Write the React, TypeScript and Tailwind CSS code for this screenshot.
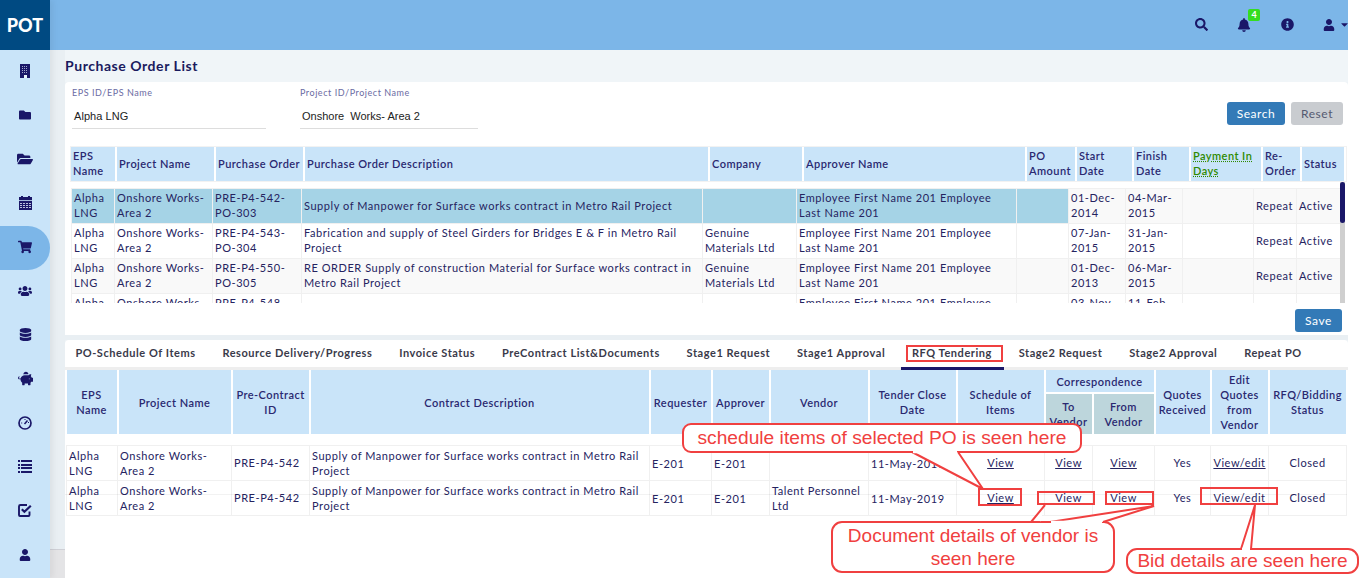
import React from "react";
import { FaFolder, FaFolderOpen, FaShoppingCart, FaUsers, FaDatabase, FaPiggyBank, FaUser, FaSearch, FaBell, FaInfoCircle, FaCaretDown } from "react-icons/fa";

const Gauge = () => (
  <svg width="14" height="14" viewBox="0 0 14 14" fill="none" stroke="currentColor">
    <circle cx="7" cy="7" r="6" strokeWidth="1.7" />
    <path d="M6.5 8 9.5 4.5" strokeWidth="1.5" />
    <path d="M3.2 7h1M7 3v1M10 6.5h1" strokeWidth="1" />
  </svg>
);
const Building = () => (
  <svg width="10" height="14" viewBox="0 0 10 14">
    <rect width="10" height="14" fill="currentColor" />
    <path d="M2 2.5h6M2 4.5h6M2 6.5h6M2 8.5h6" stroke="#a4a7cc" strokeWidth="1" strokeDasharray="1 1" />
    <rect x="4" y="11" width="3" height="3" fill="#e8f2fa" />
  </svg>
);
const Calendar = () => (
  <svg width="13" height="14" viewBox="0 0 13 14">
    <rect y="1" width="13" height="13" fill="currentColor" />
    <rect x="2" y="0" width="2" height="2" fill="currentColor" />
    <rect x="9" y="0" width="2" height="2" fill="currentColor" />
    <path d="M0 4.5h13" stroke="#c9e4f9" strokeWidth="0.8" />
    <path d="M1 7.5h11M1 9.5h11M1 11.5h11" stroke="#b9bfdc" strokeWidth="1" strokeDasharray="2 1" />
  </svg>
);
const ListIcon = () => (
  <svg width="14" height="13" viewBox="0 0 14 13" fill="currentColor">
    <rect y="0" width="2" height="2" /><rect x="3" y="0" width="11" height="2" />
    <rect y="4" width="2" height="2" /><rect x="3" y="4" width="11" height="2" />
    <rect y="7" width="2" height="2" /><rect x="3" y="7" width="11" height="2" />
    <rect y="11" width="2" height="2" /><rect x="3" y="11" width="11" height="2" />
  </svg>
);
const CheckIcon = () => (
  <svg width="14" height="13" viewBox="0 0 14 13" fill="none" stroke="currentColor">
    <path d="M9 1H2.5A1.5 1.5 0 0 0 1 2.5v8.5A1 1 0 0 0 2 12h8.5a1 1 0 0 0 1-1V7.5" strokeWidth="1.9" />
    <path d="M3.8 5.2 6.4 7.8 12.8 1.8" strokeWidth="2.2" />
  </svg>
);

const navIcons = [
  <Building />, <FaFolder size={12} />, <FaFolderOpen size={16} />, <Calendar />,
  <FaShoppingCart size={14} />, <FaUsers size={14} />, <FaDatabase size={13} />, <FaPiggyBank size={15} />,
  <Gauge />, <ListIcon />, <CheckIcon />, <FaUser size={12} />,
];

const topHead = ["EPS Name", "Project Name", "Purchase Order", "Purchase Order Description", "Company", "Approver Name", "PO Amount", "Start Date", "Finish Date", "Payment In Days", "Re-Order", "Status"];
const topHeadW = [45, 99, 89, 405, 94, 223, 50, 57, 57, 72, 39, 44];
const topBodyW = [43, 98, 89, 401, 94, 220, 52, 57, 57, 71, 43, 44];
const emp = "Employee First Name 201 Employee Last Name 201";
const topRows = [
  ["Alpha LNG", "Onshore Works-Area 2", "PRE-P4-542-PO-303", "Supply of Manpower for Surface works contract in Metro Rail Project", "", emp, "", "01-Dec-2014", "04-Mar-2015", "", "Repeat", "Active"],
  ["Alpha LNG", "Onshore Works-Area 2", "PRE-P4-543-PO-304", "Fabrication and supply of Steel Girders for Bridges E & F in Metro Rail Project", "Genuine Materials Ltd", emp, "", "07-Jan-2015", "31-Jan-2015", "", "Repeat", "Active"],
  ["Alpha LNG", "Onshore Works-Area 2", "PRE-P4-550-PO-305", "RE ORDER Supply of construction Material for Surface works contract in Metro Rail Project", "Genuine Materials Ltd", emp, "", "01-Dec-2013", "06-Mar-2015", "", "Repeat", "Active"],
  ["Alpha LNG", "Onshore Works-Area 2", "PRE-P4-548-PO-306", "", "", emp, "", "03-Nov-2014", "11-Feb-2015", "", "Repeat", "Active"],
];
const tabs = ["PO-Schedule Of Items", "Resource Delivery/Progress", "Invoice Status", "PreContract List&Documents", "Stage1 Request", "Stage1 Approval", "RFQ Tendering", "Stage2 Request", "Stage2 Approval", "Repeat PO"];
const botW = [51, 114, 78, 340, 62, 58, 99, 88, 88, 48, 62, 56, 58, 78];
const desc = "Supply of Manpower for Surface works contract in Metro Rail Project";
const botRows = [
  ["Alpha LNG", "Onshore Works-Area 2", "PRE-P4-542", desc, "E-201", "E-201", "", "11-May-2019"],
  ["Alpha LNG", "Onshore Works-Area 2", "PRE-P4-542", desc, "E-201", "E-201", "Talent Personnel Ltd", "11-May-2019"],
];

const Cols = ({ w }: { w: number[] }) => (
  <colgroup>
    {w.map((x, i) => <col key={i} style={{ width: x }} />)}
  </colgroup>
);

const th = "bg-[#c9e4f9] border-r-2 border-white font-semibold tracking-[0.45px] text-center px-[2px] leading-[15px]";
const rc = "border border-[#f0f0f0] text-center pt-[1px]";
const Link = ({ children }: { children: React.ReactNode }) => <span className="underline">{children}</span>;

export default function App() {
  return (
    <div className="relative w-[1361px] h-[578px] overflow-hidden bg-white flex text-[11px] tracking-[0.55px] text-[#25235f] font-['Lato','Noto_Sans',sans-serif]">
      <div className="w-[1348px] h-full flex shrink-0">
        <aside className="w-[50px] shrink-0 bg-[#c9e4f9] flex flex-col z-10 shadow-[3px_0_6px_rgba(0,0,0,0.06)]">
          <div className="h-[50px] bg-[#004a82] text-white text-[18px] font-black tracking-normal flex items-center justify-center">POT</div>
          {navIcons.map((ic, i) => (
            <div key={i} className={`h-[44px] shrink-0 flex items-center justify-center pb-[3px] text-[#1a1768] ${i === 4 ? "bg-[#7cb6e8] rounded-r-[22px]" : ""}`}>{ic}</div>
          ))}
        </aside>
        <div className="flex-1 min-w-0 flex flex-col">
          <header className="h-[50px] shrink-0 bg-[#7cb6e8] flex items-center justify-end text-[#1a1768] overflow-hidden pb-[1px]">
            <FaSearch size={13} className="mr-[29px]" />
            <div className="relative mr-[30px]">
              <FaBell size={14} />
              <span className="absolute left-[11px] top-[-9px] w-[12px] h-[12px] rounded-[2px] bg-[#35dd1f] text-white text-[9px] font-bold tracking-normal leading-[12px] text-center">4</span>
            </div>
            <FaInfoCircle size={13} className="mr-[29px]" />
            <FaUser size={12} className="mr-[4px]" />
            <FaCaretDown size={11} className="mr-[-2px]" />
          </header>
          <div className="flex-1 min-h-0 flex bg-[#eef3f6]">
            <div className="w-[15px] shrink-0 flex flex-col">
              <div className="flex-1 bg-[#e9eff3]" />
              <div className="h-[29px] bg-[#e4e4e6] border-t border-[#cfd0d6]" />
            </div>
            <main className="flex-1 min-w-0 flex flex-col">
              <h1 className="h-[32px] shrink-0 flex items-center text-[14px] font-bold text-[#1a1a5e] bg-[#f0f5f8] pb-[1px]">Purchase Order List</h1>
              <section className="h-[253px] shrink-0 bg-white rounded-t-[4px] flex flex-col">
                <div className="h-[64px] shrink-0 flex pl-[7px] pr-[5px]">
                  <div className="w-[194px] mr-[34px] pt-[5px]">
                    <div className="text-[9px] leading-[11px] text-[#6b6ba3]">EPS ID/EPS Name</div>
                    <div className="mt-[11px] h-[20px] border-b border-[#ddd] pl-[2px] text-[#222] tracking-[0.05px] leading-[15px] font-['Liberation_Sans',sans-serif]">Alpha LNG</div>
                  </div>
                  <div className="w-[178px] pt-[5px]">
                    <div className="text-[9px] leading-[11px] text-[#6b6ba3]">Project ID/Project Name</div>
                    <div className="mt-[11px] h-[20px] border-b border-[#ddd] pl-[2px] text-[#222] tracking-normal leading-[15px] whitespace-pre font-['Liberation_Sans',sans-serif]">Onshore  Works- Area 2</div>
                  </div>
                  <div className="ml-auto flex gap-[6px] pt-[20px]">
                    <button className="w-[58px] h-[23px] rounded-[3px] bg-[#337ab7] text-white text-[12px]">Search</button>
                    <button className="w-[52px] h-[23px] rounded-[3px] bg-[#c9ccd0] text-[#555a70] text-[12px]">Reset</button>
                  </div>
                </div>
                <div className="ml-[5px] w-[1277px] bg-[#f2f2f2] px-[1px] py-[1px] shrink-0">
                  <table className="table-fixed border-collapse w-[1274px]">
                    <Cols w={topHeadW} />
                    <tbody>
                      <tr className="h-[34px]">
                        {topHead.map((h, i) => (
                          <td key={h} className="bg-[#c9e4f9] border-r-2 border-white font-semibold tracking-[0.45px] pl-[2px] pb-[2px] leading-[15px] text-[#2a2870]">
                            {i === 9 ? <span className="text-[#2f8a00] underline decoration-dotted">{h}</span> : h}
                          </td>
                        ))}
                      </tr>
                    </tbody>
                  </table>
                </div>
                <div className="h-[121px] shrink-0 flex pl-[6px] overflow-hidden">
                  <div className="w-[1269px] pt-[6px]">
                    <table className="table-fixed border-collapse w-[1269px]">
                      <Cols w={topBodyW} />
                      <tbody>
                        {topRows.map((r, ri) => (
                          <tr key={ri} className="h-[35px]">
                            {r.map((c, ci) => (
                              <td key={ci} className={`border border-[#f0f0f0] px-[2px] pb-[2px] leading-[15px] ${ri === 0 && ci <= 6 ? "bg-[#a5d3e6] border-[#e8f3f8]" : ri % 2 === 0 ? "bg-[#f9f9f9]" : "bg-white"}`}>{c}</td>
                            ))}
                          </tr>
                        ))}
                      </tbody>
                    </table>
                  </div>
                  <div className="w-[5px] shrink-0 bg-[#cfcfcf]">
                    <div className="h-[41px] bg-[#1a1768] rounded-[3px]" />
                  </div>
                </div>
                <div className="flex justify-end pr-[6px] pt-[6px]">
                  <button className="w-[47px] h-[23px] rounded-[3px] bg-[#337ab7] text-white text-[12px]">Save</button>
                </div>
              </section>
              <div className="h-[5px] shrink-0 bg-[#e9eff3]" />
              <section className="flex-1 min-h-0 bg-white rounded-t-[4px] flex flex-col">
                <div className="h-[27px] shrink-0 flex font-bold text-[#3a3a4a] -ml-[3px]">
                  {tabs.map((t) => (
                    <div key={t} className="h-[27px] px-[13.4px] flex items-center whitespace-nowrap">{t}</div>
                  ))}
                </div>
                <div className="h-[3px] shrink-0 bg-[#eeeeee]">
                  <div className="ml-[836px] w-[103px] h-[3px] bg-[#1a1768]" />
                </div>
                <table className="table-fixed border-collapse ml-[1px] w-[1280px]">
                  <Cols w={botW} />
                  <thead className="text-[#2a2870]">
                    <tr className="h-[23px]">
                      <th rowSpan={2} className={th}>EPS Name</th>
                      <th rowSpan={2} className={th}>Project Name</th>
                      <th rowSpan={2} className={th}>Pre-Contract ID</th>
                      <th rowSpan={2} className={th}>Contract Description</th>
                      <th rowSpan={2} className={th}>Requester</th>
                      <th rowSpan={2} className={th}>Approver</th>
                      <th rowSpan={2} className={th}>Vendor</th>
                      <th rowSpan={2} className={th}>Tender Close Date</th>
                      <th rowSpan={2} className={th}>Schedule of Items</th>
                      <th colSpan={2} className={`${th} border-b-2`}>Correspondence</th>
                      <th rowSpan={2} className={th}>Quotes Received</th>
                      <th rowSpan={2} className={th}>Edit Quotes from Vendor</th>
                      <th rowSpan={2} className={th}>RFQ/Bidding Status</th>
                    </tr>
                    <tr className="h-[41px]">
                      <th className="bg-[#bdd6dc] border-r-2 border-white font-semibold tracking-[0.45px] leading-[15px]">To Vendor</th>
                      <th className="bg-[#bdd6dc] border-r-2 border-white font-semibold tracking-[0.45px] leading-[15px]">From Vendor</th>
                    </tr>
                    <tr className="h-[11px]"><th colSpan={14} className="bg-white p-0" /></tr>
                  </thead>
                  <tbody>
                    {botRows.map((r, ri) => (
                      <tr key={ri} className="h-[35px]">
                        {r.map((c, ci) => (
                          <td key={ci} className={`border border-[#f0f0f0] px-[2px] leading-[15px] ${ci === 4 || ci === 5 || ci === 7 ? "pt-[1px]" : ""}`}>{c}</td>
                        ))}
                        <td className={rc}><Link>View</Link></td>
                        <td className={rc}><Link>View</Link></td>
                        <td className={rc}><Link>View</Link></td>
                        <td className={rc}>Yes</td>
                        <td className={rc}><Link>View/edit</Link></td>
                        <td className={rc}>Closed</td>
                      </tr>
                    ))}
                  </tbody>
                </table>
              </section>
            </main>
          </div>
        </div>
      </div>

      {/* annotations drawn over the page */}
      <div className="absolute left-[65px] top-[494px] w-[1282px] h-px bg-black/5" />
      <div className="absolute left-[906px] top-[345px] w-[97px] h-[17px] border-2 border-[#f04040]" />
      <div className="absolute left-[978px] top-[488px] w-[44px] h-[18px] border-2 border-[#f04040]" />
      <div className="absolute left-[1037px] top-[491px] w-[58px] h-[14px] border-2 border-[#f04040]" />
      <div className="absolute left-[1105px] top-[491px] w-[49px] h-[14px] border-2 border-[#f04040]" />
      <div className="absolute left-[1200px] top-[487px] w-[78px] h-[18px] border-2 border-[#f04040]" />
      <div className="absolute left-[682px] top-[423px] w-[400px] h-[30px] rounded-[9px] border-2 border-[#f04040] bg-white flex items-center justify-center text-[19.2px] tracking-normal text-[#f04040] font-['Liberation_Sans',sans-serif] whitespace-nowrap">schedule items of selected PO is seen here</div>
      <div className="absolute left-[831px] top-[521px] w-[284px] h-[52px] rounded-[11px] border-2 border-[#f04040] bg-white flex items-center justify-center text-center text-[19px] leading-[23px] tracking-normal text-[#f04040] font-['Liberation_Sans',sans-serif]">Document details of vendor is seen here</div>
      <div className="absolute left-[1126px] top-[548px] w-[233px] h-[26px] rounded-[11px] border-2 border-[#f04040] bg-white flex items-center justify-center text-[19px] tracking-normal text-[#f04040] font-['Liberation_Sans',sans-serif] whitespace-nowrap">Bid details are seen here</div>
      <svg className="absolute left-0 top-0 pointer-events-none" width="1361" height="578" fill="none">
        <path d="M912 452 983 489 958 452" fill="white" stroke="#f04040" strokeWidth="2" strokeLinejoin="miter" />
        <path d="M913 452H957" stroke="white" strokeWidth="2.5" />
        <path d="M1045 505 1031 522H1040" fill="white" stroke="#f04040" strokeWidth="2" />
        <path d="M1050 522 1154 506 1103 522" fill="white" stroke="#f04040" strokeWidth="2" />
        <path d="M1051 522H1102" stroke="white" strokeWidth="2.5" />
        <path d="M1241 549 1255 505 1251 549" fill="white" stroke="#f04040" strokeWidth="2" />
        <path d="M1242 549H1250" stroke="white" strokeWidth="2.5" />
      </svg>
    </div>
  );
}
